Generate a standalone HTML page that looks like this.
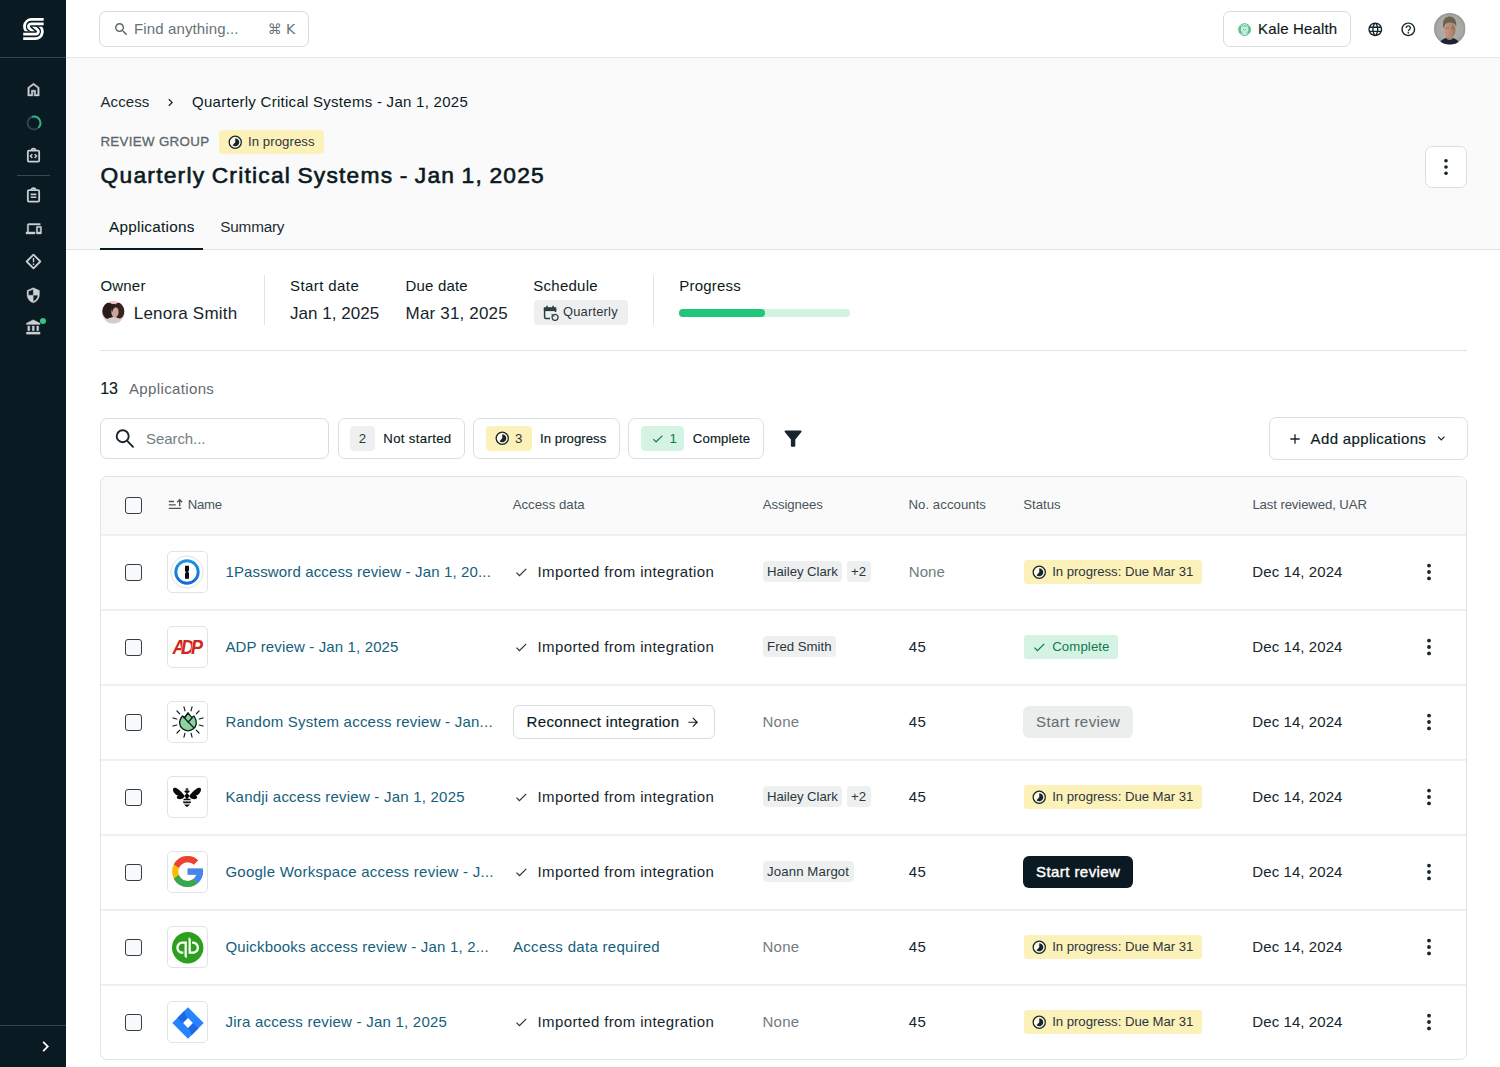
<!DOCTYPE html>
<html lang="en"><head><meta charset="utf-8"><title>Quarterly Critical Systems - Jan 1, 2025</title>
<style>

*{box-sizing:border-box;margin:0;padding:0}
html,body{width:1500px;height:1067px;overflow:hidden;background:#fff}
body{position:relative;font-family:"Liberation Sans",sans-serif;color:#0b1a22;-webkit-font-smoothing:antialiased}
.t{position:absolute;white-space:pre;display:block}
.b{position:absolute;display:block}
.box{position:absolute;background:#fff;border:1px solid #d9dddf;border-radius:7px}
svg{position:absolute;display:block;overflow:visible}
.chip{position:absolute;background:#eef0f0;border-radius:4px}
.cb{position:absolute;width:16.6px;height:16.6px;border:1.3px solid #333f45;border-radius:3px;background:#f7f9fa}
.ico{position:absolute;width:41.5px;height:41.5px;border:1px solid #e1e4e5;border-radius:5px;background:#fff}
.hl{position:absolute;height:1px;background:#e4e6e7}

</style></head>
<body>
<div class="page-bg">
<div class="b" style="left:66px;top:58px;width:1434px;height:191px;background:#fafafa"></div>
<div class="hl" style="left:66px;top:57px;width:1434px;background:#e3e5e6"></div>
<div class="hl" style="left:66px;top:249px;width:1434px;background:#e0e3e4"></div>
</div>
<aside class="sidebar">
<div class="b" style="left:0;top:0;width:66px;height:1067px;background:#0a1a23"></div>
<div class="b" style="left:0;top:57px;width:66px;height:1px;background:#34434b"></div>
<div class="b" style="left:17px;top:175px;width:33px;height:1px;background:#3a4951"></div>
<div class="b" style="left:0;top:1025px;width:66px;height:1px;background:#34434b"></div>
<svg style="left:0;top:0" width="66" height="58" viewBox="0 0 66 58"><defs><clipPath id="lgc"><rect x="0" y="0" width="66" height="31.25"/></clipPath></defs><g fill="none" stroke="#fff" stroke-width="2.8"><g clip-path="url(#lgc)"><path d="M43.66 19.46H31.5A7.0 7.0 0 0 0 29.69 33.22"/><path d="M43.66 23.97H31.0A2.5 2.5 0 0 0 29.36 28.36L34.64 32.95"/></g><g transform="rotate(180 33.43 29.04)"><g clip-path="url(#lgc)"><path d="M43.66 19.46H31.5A7.0 7.0 0 0 0 29.69 33.22"/><path d="M43.66 23.97H31.0A2.5 2.5 0 0 0 29.36 28.36L34.64 32.95"/></g></g></g></svg>
<svg style="left:24.80px;top:80.60px" width="17" height="17" viewBox="0 0 24 24" stroke="#c9cfd4" stroke-width="0.7"><path fill="#c9cfd4" d="M6 19h3v-6h6v6h3v-9l-6-4.5L6 10zm-2 2V9l8-6 8 6v12h-7v-6h-2v6z"/></svg>
<svg style="left:24.50px;top:113.80px" width="18" height="18" viewBox="0 0 24 24"><circle cx="12" cy="12" r="8.6" fill="none" stroke="#34454e" stroke-width="2.5"/><path d="M10.2 3.6A8.6 8.6 0 0 1 18.6 17.5" fill="none" stroke="#2bb57c" stroke-width="2.5" stroke-linecap="round"/></svg>
<svg style="left:25.00px;top:147.30px" width="17" height="17" viewBox="0 0 24 24"><g fill="none" stroke="#c9cfd4" stroke-width="2.5"><rect x="4" y="5" width="16" height="15.5" rx="1.6"/><path d="M9.3 5a2.7 2.7 0 0 1 5.4 0" /><path d="M10.3 10.2L7.8 12.8l2.5 2.6M13.7 10.2l2.5 2.6-2.5 2.6" stroke-width="2.1"/></g></svg>
<svg style="left:25.10px;top:186.50px" width="17" height="17" viewBox="0 0 24 24"><g fill="none" stroke="#c9cfd4" stroke-width="2.5"><rect x="4" y="4.5" width="16" height="16" rx="1.6"/><path d="M9 4.5a3 3 0 0 1 6 0" /><path d="M8 10.5h8M8 14.5h8" stroke-width="2.4"/></g></svg>
<svg style="left:25.75px;top:220.75px" width="15.5" height="15.5" viewBox="0 0 24 24" stroke="#c9cfd4" stroke-width="0.7"><path fill="#c9cfd4" d="M4 6h18V4H4c-1.1 0-2 .9-2 2v11H0v3h14v-3H4V6zm19 2h-6c-.55 0-1 .45-1 1v10c0 .55.45 1 1 1h6c.55 0 1-.45 1-1V9c0-.55-.45-1-1-1zm-1 9h-4v-7h4v7z"/></svg>
<svg style="left:24.90px;top:253.00px" width="17" height="17" viewBox="0 0 24 24"><g fill="none" stroke="#c9cfd4" stroke-width="2.5"><path d="M12 2.4L21.6 12 12 21.6 2.4 12z" stroke-linejoin="round"/></g><path fill="#c9cfd4" d="M11 7.2h2v6h-2zM11 14.8h2v2h-2z"/></svg>
<svg style="left:25.05px;top:286.55px" width="16.5" height="16.5" viewBox="0 0 24 24" stroke="#c9cfd4" stroke-width="0.5"><path fill="#c9cfd4" d="M12 1L3 5v6c0 5.55 3.84 10.74 9 12 5.16-1.26 9-6.45 9-12V5l-9-4zm0 10.99h7c-.53 4.12-3.28 7.79-7 8.94V12H5V6.3l7-3.11v8.8z"/></svg>
<svg style="left:25.15px;top:319.35px" width="16.5" height="16.5" viewBox="0 0 24 24" stroke="#c9cfd4" stroke-width="0.4"><path fill="#c9cfd4" d="M4 10h3v7H4zM10.5 10h3v7h-3zM2 19h20v3H2zM17 10h3v7h-3zM12 1L2 6v2h20V6z"/></svg>
<div class="b" style="left:39.5px;top:317.5px;width:6.6px;height:6.6px;border-radius:50%;background:#2dc97f"></div>
<svg style="left:34.70px;top:1035.50px" width="21" height="21" viewBox="0 0 24 24" ><path fill="#fff" d="M10 6L8.59 7.41 13.17 12l-4.58 4.59L10 18l6-6z"/></svg>
</aside>
<header class="topbar">
<div class="box" style="left:99px;top:11px;width:210px;height:36px;border-color:#d7dbdd"></div>
<svg style="left:112.50px;top:21.10px" width="16.6" height="16.6" viewBox="0 0 24 24" ><path fill="#5a6569" d="M15.5 14h-.79l-.28-.27C15.41 12.59 16 11.11 16 9.5 16 5.91 13.09 3 9.5 3S3 5.91 3 9.5 5.91 16 9.5 16c1.61 0 3.09-.59 4.23-1.57l.27.28v.79l5 4.99L20.49 19l-4.99-5zm-6 0C7.01 14 5 11.99 5 9.5S7.01 5 9.5 5 14 7.01 14 9.5 11.99 14 9.5 14z"/></svg>
<span class="t" style="left:134.00px;top:18.40px;font-size:15px;line-height:21px;font-weight:400;color:#687378;letter-spacing:0.121px;">Find anything...</span>
<span class="t" style="left:267.80px;top:19.40px;font-size:14px;line-height:20px;font-weight:400;color:#687378;letter-spacing:-0.078px;font-family:&quot;DejaVu Sans&quot;,sans-serif;">⌘ K</span>
<div class="box" style="left:1223px;top:11px;width:128px;height:36px;border-color:#d7dbdd"></div>
<svg style="left:1238.40px;top:22.60px" width="13.2" height="13.2" viewBox="0 0 24 24"><circle cx="12" cy="12" r="10.800" fill="#c4f1de" stroke="#58b98c" stroke-width="1.800"/><path d="M4.500 6.500C3 10 3.500 15 5 18M19.500 6.500C21 10 20.500 15 19 18" fill="none" stroke="#4fae84" stroke-width="2.600"/><path d="M9 10.500L12 13.500L15 10.500M7.500 19.500V15.500M16.500 19.500V15.500M6 5.500H18" fill="none" stroke="#5ab38b" stroke-width="1.500"/></svg>
<span class="t" style="left:1258.00px;top:18.40px;font-size:15px;line-height:21px;font-weight:400;color:#0b1a22;letter-spacing:0.149px;-webkit-text-stroke:0.15px currentColor;">Kale Health</span>
<svg style="left:1366.70px;top:20.90px" width="16.6" height="16.6" viewBox="0 0 24 24" ><path fill="#16252c" d="M11.99 2C6.47 2 2 6.48 2 12s4.47 10 9.99 10C17.52 22 22 17.52 22 12S17.52 2 11.99 2zm6.93 6h-2.95c-.32-1.25-.78-2.45-1.38-3.56 1.84.63 3.37 1.91 4.33 3.56zM12 4.04c.83 1.2 1.48 2.53 1.91 3.96h-3.82c.43-1.43 1.08-2.76 1.91-3.96zM4.26 14C4.1 13.36 4 12.69 4 12s.1-1.36.26-2h3.38c-.08.66-.14 1.32-.14 2 0 .68.06 1.34.14 2H4.26zm.82 2h2.95c.32 1.25.78 2.45 1.38 3.56-1.84-.63-3.37-1.9-4.33-3.56zm2.95-8H5.08c.96-1.66 2.49-2.93 4.33-3.56C8.81 5.55 8.35 6.75 8.03 8zM12 19.96c-.83-1.2-1.48-2.53-1.91-3.96h3.82c-.43 1.43-1.08 2.76-1.91 3.96zM14.34 14H9.66c-.09-.66-.16-1.32-.16-2 0-.68.07-1.35.16-2h4.68c.09.65.16 1.32.16 2 0 .68-.07 1.34-.16 2zm.25 5.56c.6-1.11 1.06-2.31 1.38-3.56h2.95c-.96 1.65-2.49 2.93-4.33 3.56zM16.36 14c.08-.66.14-1.32.14-2 0-.68-.06-1.34-.14-2h3.38c.16.64.26 1.31.26 2s-.1 1.36-.26 2h-3.38z"/></svg>
<svg style="left:1399.90px;top:20.90px" width="16.6" height="16.6" viewBox="0 0 24 24" ><path fill="#16252c" d="M11 18h2v-2h-2v2zm1-16C6.48 2 2 6.48 2 12s4.48 10 10 10 10-4.48 10-10S17.52 2 12 2zm0 18c-4.41 0-8-3.59-8-8s3.59-8 8-8 8 3.59 8 8-3.59 8-8 8zm0-14c-2.21 0-4 1.79-4 4h2c0-1.1.9-2 2-2s2 .9 2 2c0 2-3 1.75-3 5h2c0-2.25 3-2.5 3-5 0-2.21-1.79-4-4-4z"/></svg>
<svg style="left:1434.3px;top:13.1px" width="31.5" height="31.5" viewBox="0 0 32 32"><defs><clipPath id="av1"><circle cx="16" cy="16" r="16"/></clipPath><radialGradient id="avg" cx="0.5" cy="0.5" r="0.5"><stop offset="0" stop-color="#b1b3af"/><stop offset="0.82" stop-color="#a8a9a5"/><stop offset="1" stop-color="#959593"/></radialGradient><linearGradient id="avf" x1="0" y1="0" x2="1" y2="0"><stop offset="0" stop-color="#c89a84"/><stop offset="0.55" stop-color="#b88b74"/><stop offset="1" stop-color="#9a735f"/></linearGradient></defs><g clip-path="url(#av1)"><rect width="32" height="32" fill="url(#avg)"/><path d="M5 33C6 27.500 9.500 26 12.500 25.300L19.500 25.600C22.500 26.500 25.500 28 26 33z" fill="#1b2434"/><path d="M12.800 21h6v5.200c-1.500 1.600-4.500 1.600-6 0z" fill="#b0846d"/><ellipse cx="16" cy="17.300" rx="5.900" ry="7.900" fill="url(#avf)"/><path d="M9.600 15.500C8.200 9 10 4.200 15 3.600C20 2.800 23.600 7 22.500 14.600C22 11.500 20.500 10 17.500 9.800C14 9.600 11.500 10.500 10.800 13z" fill="#6d6250"/><path d="M11.500 15.300h3.200M17.300 15.300h3.200" stroke="#6e5245" stroke-width="0.900" opacity="0.700"/></g></svg>
</header>
<main>
<section class="page-header">
<span class="t" style="left:100.50px;top:91.40px;font-size:15px;line-height:21px;font-weight:400;color:#1b2930;letter-spacing:0.073px;">Access</span>
<svg style="left:163.00px;top:94.90px" width="15" height="15" viewBox="0 0 24 24" ><path fill="#16252c" d="M10 6L8.59 7.41 13.17 12l-4.58 4.59L10 18l6-6z"/></svg>
<span class="t" style="left:192.00px;top:91.40px;font-size:15px;line-height:21px;font-weight:400;color:#0b1a22;letter-spacing:0.273px;">Quarterly Critical Systems - Jan 1, 2025</span>
<span class="t" style="left:100.40px;top:132.20px;font-size:13.3px;line-height:19px;font-weight:400;color:#5a666b;letter-spacing:0.340px;-webkit-text-stroke:0.3px currentColor;">REVIEW GROUP</span>
<div class="b" style="left:219px;top:129.5px;width:105px;height:24.5px;border-radius:4px;background:#fdf1ba"></div>
<svg style="left:228.05px;top:134.85px" width="14.5" height="14.5" viewBox="0 0 24 24"><circle cx="12" cy="12" r="10.1" fill="#fff" fill-opacity="0.55" stroke="#16252c" stroke-width="2.1"/><path d="M12 12V5.3A6.7 6.7 0 1 1 7.52 16.98z" fill="#16252c"/></svg>
<span class="t" style="left:248.00px;top:132.80px;font-size:13.2px;line-height:18px;font-weight:400;color:#2a363c;letter-spacing:0.056px;">In progress</span>
<span class="t" style="left:100.60px;top:159.20px;font-size:22.8px;line-height:32px;font-weight:400;color:#0b1a22;letter-spacing:1.218px;word-spacing:-1.2px;-webkit-text-stroke:0.62px currentColor;">Quarterly Critical Systems - Jan 1, 2025</span>
<div class="box" style="left:1425px;top:146px;width:42px;height:42px;border-color:#dcdfe1"></div>
<svg style="left:1443px;top:156.6px" width="6" height="20" viewBox="0 0 6 20"><circle cx="3" cy="3.7" r="1.8" fill="#16252c"/><circle cx="3" cy="10" r="1.8" fill="#16252c"/><circle cx="3" cy="16.3" r="1.8" fill="#16252c"/></svg>
<span class="t" style="left:109.00px;top:216.20px;font-size:15.3px;line-height:21px;font-weight:400;color:#0b1a22;letter-spacing:0.260px;-webkit-text-stroke:0.08px currentColor;">Applications</span>
<span class="t" style="left:220.30px;top:216.20px;font-size:15.3px;line-height:21px;font-weight:400;color:#1f2c33;letter-spacing:-0.208px;">Summary</span>
<div class="b" style="left:100px;top:248px;width:103px;height:2px;background:#0b1a22"></div>
</section>
<section class="review-meta">
<span class="t" style="left:100.40px;top:275.00px;font-size:15px;line-height:21px;font-weight:400;color:#0b1a22;letter-spacing:0.203px;">Owner</span>
<svg style="left:101.5px;top:301.400px" width="22.600" height="22.600" viewBox="0 0 24 24"><defs><clipPath id="av2"><circle cx="12" cy="12" r="12"/></clipPath></defs><g clip-path="url(#av2)"><rect width="24" height="24" fill="#efc9d1"/><ellipse cx="7" cy="10.600" rx="6.700" ry="8.800" fill="#2b1a1c"/><ellipse cx="17.800" cy="10.400" rx="6.100" ry="8.500" fill="#38231f"/><ellipse cx="12.300" cy="9.500" rx="4.500" ry="6.500" fill="#2b1a1c"/><path d="M3.500 25C4 19.500 7 17.300 12.500 17.300S20.500 19.500 21 25z" fill="#d6ccc8"/><ellipse cx="13.700" cy="11.600" rx="3.900" ry="5.600" fill="#caa59b"/><path d="M10 9.500C10.500 6.500 13 5.500 15.500 6.300C12.500 7 11.500 8.500 10.800 12z" fill="#2b1a1c"/></g></svg>
<span class="t" style="left:133.80px;top:301.50px;font-size:17px;line-height:24px;font-weight:400;color:#16252c;letter-spacing:0.198px;">Lenora Smith</span>
<div class="b" style="left:264px;top:275px;width:1px;height:50px;background:#e1e4e5"></div>
<span class="t" style="left:290.00px;top:275.00px;font-size:15px;line-height:21px;font-weight:400;color:#0b1a22;letter-spacing:0.415px;">Start date</span>
<span class="t" style="left:290.00px;top:301.50px;font-size:17px;line-height:24px;font-weight:400;color:#16252c;letter-spacing:0.040px;">Jan 1, 2025</span>
<span class="t" style="left:405.60px;top:275.00px;font-size:15px;line-height:21px;font-weight:400;color:#0b1a22;letter-spacing:0.164px;">Due date</span>
<span class="t" style="left:405.60px;top:301.50px;font-size:17px;line-height:24px;font-weight:400;color:#16252c;letter-spacing:0.168px;">Mar 31, 2025</span>
<span class="t" style="left:533.30px;top:275.00px;font-size:15px;line-height:21px;font-weight:400;color:#0b1a22;letter-spacing:0.255px;">Schedule</span>
<div class="b" style="left:533.5px;top:300px;width:94.5px;height:24.7px;border-radius:4px;background:#eef0f0"></div>
<svg style="left:540px;top:303px" width="22" height="20" viewBox="540 303 22 20"><g fill="none" stroke="#2b3f40" stroke-width="1.500"><path d="M550 318.400H545.800A1.200 1.200 0 0 1 544.600 317.200V308.600"/><path d="M555.500 308.600V312"/><path d="M547 305.800V308M553.100 305.800V308" stroke-width="1.600"/><path d="M552.300 316.300A3 3 0 1 0 553.400 314.900" stroke-width="1.300"/></g><path d="M543.850 307.200H556.250V311.100H543.850z" fill="#2b3f40"/><path d="M551.700 313.400V316.600H554.900z" fill="#2b3f40"/></svg>
<span class="t" style="left:563.00px;top:302.80px;font-size:12.9px;line-height:18px;font-weight:400;color:#2a363c;letter-spacing:0.198px;">Quarterly</span>
<div class="b" style="left:653px;top:275px;width:1px;height:50px;background:#e1e4e5"></div>
<span class="t" style="left:679.30px;top:275.00px;font-size:15px;line-height:21px;font-weight:400;color:#0b1a22;letter-spacing:0.196px;">Progress</span>
<div class="b" style="left:679px;top:308.5px;width:171px;height:8px;border-radius:4px;background:#d3f2e2"></div>
<div class="b" style="left:679px;top:308.5px;width:85.5px;height:8px;border-radius:4px;background:#1fc77c"></div>
<div class="hl" style="left:100px;top:350px;width:1367px;background:#e1e4e5"></div>
</section>
<section class="toolbar">
<span class="t" style="left:100.30px;top:377.50px;font-size:16px;line-height:22px;font-weight:400;color:#0b1a22;letter-spacing:-0.198px;-webkit-text-stroke:0.15px currentColor;">13</span>
<span class="t" style="left:129.00px;top:378.00px;font-size:15px;line-height:21px;font-weight:400;color:#5f6a6f;letter-spacing:0.359px;">Applications</span>
<div class="box" style="left:100px;top:418px;width:229px;height:41px;border-color:#d9dddf"></div>
<svg style="left:110px;top:425px" width="30" height="28" viewBox="110 425 30 28"><g fill="none" stroke="#16252c" stroke-width="1.9"><circle cx="122.7" cy="436.2" r="6"/><path d="M127 440.6L133 446.8" stroke-linecap="round"/></g></svg>
<span class="t" style="left:146.00px;top:428.00px;font-size:15px;line-height:21px;font-weight:400;color:#747e82;letter-spacing:-0.070px;">Search...</span>
<div class="box" style="left:337.5px;top:418px;width:127px;height:41px;border-color:#dcdfe1"></div>
<div class="chip" style="left:350px;top:426px;width:25px;height:25px"></div>
<span class="t" style="left:358.70px;top:429.50px;font-size:13.2px;line-height:18px;font-weight:400;color:#2a363c;">2</span>
<span class="t" style="left:383.30px;top:429.50px;font-size:13.2px;line-height:18px;font-weight:400;color:#0b1a22;letter-spacing:0.335px;-webkit-text-stroke:0.15px currentColor;">Not started</span>
<div class="box" style="left:473px;top:418px;width:146.5px;height:41px;border-color:#dcdfe1"></div>
<div class="chip" style="left:485.5px;top:426px;width:46px;height:25px;background:#fdf1ba"></div>
<svg style="left:494.95px;top:431.25px" width="14.5" height="14.5" viewBox="0 0 24 24"><circle cx="12" cy="12" r="10.1" fill="#fff" fill-opacity="0.55" stroke="#16252c" stroke-width="2.1"/><path d="M12 12V5.3A6.7 6.7 0 1 1 7.52 16.98z" fill="#16252c"/></svg>
<span class="t" style="left:515.00px;top:429.50px;font-size:13.2px;line-height:18px;font-weight:400;color:#2a363c;">3</span>
<span class="t" style="left:540.00px;top:429.50px;font-size:13.2px;line-height:18px;font-weight:400;color:#0b1a22;letter-spacing:0.038px;-webkit-text-stroke:0.15px currentColor;">In progress</span>
<div class="box" style="left:628px;top:418px;width:135.5px;height:41px;border-color:#dcdfe1"></div>
<div class="chip" style="left:640.7px;top:426px;width:43.500px;height:25px;background:#d5f3e3"></div>
<svg style="left:650.55px;top:431.85px" width="13.5" height="13.5" viewBox="0 0 24 24" ><path fill="#0e7a4d" d="M9 16.17L4.83 12l-1.42 1.41L9 19 21 7l-1.41-1.41z"/></svg>
<span class="t" style="left:669.50px;top:429.50px;font-size:13.2px;line-height:18px;font-weight:400;color:#0e7a4d;">1</span>
<span class="t" style="left:692.80px;top:429.50px;font-size:13.2px;line-height:18px;font-weight:400;color:#0b1a22;letter-spacing:0.131px;-webkit-text-stroke:0.15px currentColor;">Complete</span>
<svg style="left:780px;top:426px" width="26" height="26" viewBox="780 426 26 26"><path d="M785.5 430.400H800.700C801.500 430.400 801.900 431.300 801.400 431.900L795.300 439.400V445.800C795.300 446.300 794.900 446.700 794.400 446.700H791.800C791.300 446.700 790.900 446.300 790.900 445.800V439.400L784.800 431.900C784.300 431.300 784.700 430.400 785.500 430.400Z" fill="#16252c"/></svg>
<div class="box" style="left:1269px;top:417px;width:199px;height:43px;border-color:#dcdfe1"></div>
<svg style="left:1286.70px;top:430.60px" width="16" height="16" viewBox="0 0 24 24" ><path fill="#16252c" d="M19 13h-6v6h-2v-6H5v-2h6V5h2v6h6v2z"/></svg>
<span class="t" style="left:1310.60px;top:427.60px;font-size:15px;line-height:21px;font-weight:400;color:#0b1a22;letter-spacing:0.345px;-webkit-text-stroke:0.17px currentColor;">Add applications</span>
<svg style="left:1434.25px;top:431.35px" width="14.5" height="14.5" viewBox="0 0 24 24" ><path fill="#16252c" d="M16.59 8.59L12 13.17 7.41 8.59 6 10l6 6 6-6z"/></svg>
</section>
<section class="applications-table">
<div class="b" style="left:100px;top:476px;width:1367px;height:584px;border:1px solid #e0e2e3;border-radius:7px;background:#fff;overflow:hidden"><div style="position:absolute;left:0;top:0;width:100%;height:58px;background:#fafafa"></div></div>
<div class="cb" style="left:125px;top:497px"></div>
<svg style="left:165px;top:495px" width="22" height="18" viewBox="165 495 22 18"><g fill="none" stroke="#49555a" stroke-width="1.35"><path d="M168.8 501.5H174M168.8 504.9H175.800M168.8 508.4H181.2M179.7 506.3V500M177.200 502.300L179.700 499.800L182.200 502.300"/></g></svg>
<span class="t" style="left:187.80px;top:496.00px;font-size:13.2px;line-height:18px;font-weight:400;color:#49555a;letter-spacing:-0.297px;">Name</span>
<span class="t" style="left:512.70px;top:496.00px;font-size:13.2px;line-height:18px;font-weight:400;color:#49555a;letter-spacing:0.014px;">Access data</span>
<span class="t" style="left:762.80px;top:496.00px;font-size:13.2px;line-height:18px;font-weight:400;color:#49555a;letter-spacing:-0.095px;">Assignees</span>
<span class="t" style="left:908.50px;top:496.00px;font-size:13.2px;line-height:18px;font-weight:400;color:#49555a;letter-spacing:0.044px;">No. accounts</span>
<span class="t" style="left:1023.20px;top:496.00px;font-size:13.2px;line-height:18px;font-weight:400;color:#49555a;letter-spacing:0.002px;">Status</span>
<span class="t" style="left:1252.40px;top:496.00px;font-size:13.2px;line-height:18px;font-weight:400;color:#49555a;letter-spacing:-0.119px;">Last reviewed, UAR</span>
<div class="b" style="left:101px;top:534px;width:1365px;height:2px;background:linear-gradient(#edeeee 50%,#f0f1f1 50%)"></div>
<div class="cb" style="left:125px;top:564.0px"></div>
<div class="ico" style="left:166.8px;top:551.4px"></div>
<span class="t" style="left:225.40px;top:561.20px;font-size:15px;line-height:21px;font-weight:400;color:#14607c;letter-spacing:0.144px;">1Password access review - Jan 1, 20...</span>
<svg style="left:513.55px;top:565.05px" width="14.5" height="14.5" viewBox="0 0 24 24" ><path fill="#2a363c" d="M9 16.17L4.83 12l-1.42 1.41L9 19 21 7l-1.41-1.41z"/></svg>
<span class="t" style="left:537.60px;top:561.30px;font-size:15px;line-height:21px;font-weight:400;color:#16252c;letter-spacing:0.361px;">Imported from integration</span>
<div class="chip" style="left:762.5px;top:561.4px;width:79.8px;height:21px"></div>
<span class="t" style="left:767.10px;top:563.00px;font-size:13.2px;line-height:18px;font-weight:400;color:#2a363c;letter-spacing:-0.041px;">Hailey Clark</span>
<div class="chip" style="left:846.5px;top:561.4px;width:24.2px;height:21px"></div>
<span class="t" style="left:851.10px;top:563.00px;font-size:13.2px;line-height:18px;font-weight:400;color:#2a363c;letter-spacing:-0.023px;">+2</span>
<span class="t" style="left:908.80px;top:561.30px;font-size:15px;line-height:21px;font-weight:400;color:#727c80;letter-spacing:0.035px;">None</span>
<div class="b" style="left:1023.5px;top:559.9px;width:178.800px;height:24.300px;border-radius:3px;background:#fdf1ba"></div>
<svg style="left:1032.35px;top:564.75px" width="14.5" height="14.5" viewBox="0 0 24 24"><circle cx="12" cy="12" r="10.1" fill="#fff" fill-opacity="0.55" stroke="#16252c" stroke-width="2.1"/><path d="M12 12V5.3A6.7 6.7 0 1 1 7.52 16.98z" fill="#16252c"/></svg>
<span class="t" style="left:1052.20px;top:563.20px;font-size:13.2px;line-height:18px;font-weight:400;color:#2a363c;letter-spacing:-0.044px;">In progress: Due Mar 31</span>
<span class="t" style="left:1252.30px;top:561.30px;font-size:15px;line-height:21px;font-weight:400;color:#16252c;letter-spacing:0.080px;">Dec 14, 2024</span>
<svg style="left:1426px;top:561.8px" width="6" height="20" viewBox="0 0 6 20"><circle cx="3" cy="3.5999999999999996" r="1.9" fill="#16252c"/><circle cx="3" cy="10" r="1.9" fill="#16252c"/><circle cx="3" cy="16.4" r="1.9" fill="#16252c"/></svg>
<div class="b" style="left:101px;top:609px;width:1365px;height:2px;background:linear-gradient(#edeeee 50%,#f0f1f1 50%)"></div>
<div class="cb" style="left:125px;top:639.0px"></div>
<div class="ico" style="left:166.8px;top:626.4px"></div>
<span class="t" style="left:225.40px;top:636.20px;font-size:15px;line-height:21px;font-weight:400;color:#14607c;letter-spacing:0.141px;">ADP review - Jan 1, 2025</span>
<svg style="left:513.55px;top:640.05px" width="14.5" height="14.5" viewBox="0 0 24 24" ><path fill="#2a363c" d="M9 16.17L4.83 12l-1.42 1.41L9 19 21 7l-1.41-1.41z"/></svg>
<span class="t" style="left:537.60px;top:636.30px;font-size:15px;line-height:21px;font-weight:400;color:#16252c;letter-spacing:0.361px;">Imported from integration</span>
<div class="chip" style="left:762.5px;top:636.4px;width:73.6px;height:21px"></div>
<span class="t" style="left:767.10px;top:638.00px;font-size:13.2px;line-height:18px;font-weight:400;color:#2a363c;letter-spacing:-0.010px;">Fred Smith</span>
<span class="t" style="left:908.80px;top:636.30px;font-size:15px;line-height:21px;font-weight:400;color:#16252c;letter-spacing:0.456px;">45</span>
<div class="b" style="left:1023.5px;top:634.9px;width:94.800px;height:24.300px;border-radius:3px;background:#d5f3e3"></div>
<svg style="left:1032.35px;top:639.85px" width="14.5" height="14.5" viewBox="0 0 24 24" ><path fill="#0e7a4d" d="M9 16.17L4.83 12l-1.42 1.41L9 19 21 7l-1.41-1.41z"/></svg>
<span class="t" style="left:1052.20px;top:638.20px;font-size:13.2px;line-height:18px;font-weight:400;color:#0e7a4d;letter-spacing:0.118px;">Complete</span>
<span class="t" style="left:1252.30px;top:636.30px;font-size:15px;line-height:21px;font-weight:400;color:#16252c;letter-spacing:0.080px;">Dec 14, 2024</span>
<svg style="left:1426px;top:636.8px" width="6" height="20" viewBox="0 0 6 20"><circle cx="3" cy="3.5999999999999996" r="1.9" fill="#16252c"/><circle cx="3" cy="10" r="1.9" fill="#16252c"/><circle cx="3" cy="16.4" r="1.9" fill="#16252c"/></svg>
<div class="b" style="left:101px;top:684px;width:1365px;height:2px;background:linear-gradient(#edeeee 50%,#f0f1f1 50%)"></div>
<div class="cb" style="left:125px;top:714.0px"></div>
<div class="ico" style="left:166.8px;top:701.4px"></div>
<span class="t" style="left:225.40px;top:711.20px;font-size:15px;line-height:21px;font-weight:400;color:#14607c;letter-spacing:0.226px;">Random System access review - Jan...</span>
<div class="box" style="left:512.5px;top:705.0px;width:202px;height:34px;border-color:#d9dcdd;border-radius:6px"></div>
<span class="t" style="left:526.60px;top:711.30px;font-size:15px;line-height:21px;font-weight:400;color:#0b1a22;letter-spacing:0.327px;-webkit-text-stroke:0.17px currentColor;">Reconnect integration</span>
<svg style="left:685.55px;top:715.25px" width="14.5" height="14.5" viewBox="0 0 24 24" ><path fill="#16252c" d="M12 4l-1.41 1.41L16.17 11H4v2h12.17l-5.58 5.59L12 20l8-8z"/></svg>
<span class="t" style="left:762.60px;top:711.30px;font-size:15px;line-height:21px;font-weight:400;color:#727c80;letter-spacing:0.185px;">None</span>
<span class="t" style="left:908.80px;top:711.30px;font-size:15px;line-height:21px;font-weight:400;color:#16252c;letter-spacing:0.456px;">45</span>
<div class="b" style="left:1023px;top:705.8px;width:110px;height:32.400px;border-radius:6px;background:#eceeee"></div>
<span class="t" style="left:1036.00px;top:711.30px;font-size:15px;line-height:21px;font-weight:400;color:#666f74;letter-spacing:0.433px;-webkit-text-stroke:0.1px currentColor;">Start review</span>
<span class="t" style="left:1252.30px;top:711.30px;font-size:15px;line-height:21px;font-weight:400;color:#16252c;letter-spacing:0.080px;">Dec 14, 2024</span>
<svg style="left:1426px;top:711.8px" width="6" height="20" viewBox="0 0 6 20"><circle cx="3" cy="3.5999999999999996" r="1.9" fill="#16252c"/><circle cx="3" cy="10" r="1.9" fill="#16252c"/><circle cx="3" cy="16.4" r="1.9" fill="#16252c"/></svg>
<div class="b" style="left:101px;top:759px;width:1365px;height:2px;background:linear-gradient(#edeeee 50%,#f0f1f1 50%)"></div>
<div class="cb" style="left:125px;top:789.0px"></div>
<div class="ico" style="left:166.8px;top:776.4px"></div>
<span class="t" style="left:225.40px;top:786.20px;font-size:15px;line-height:21px;font-weight:400;color:#14607c;letter-spacing:0.224px;">Kandji access review - Jan 1, 2025</span>
<svg style="left:513.55px;top:790.05px" width="14.5" height="14.5" viewBox="0 0 24 24" ><path fill="#2a363c" d="M9 16.17L4.83 12l-1.42 1.41L9 19 21 7l-1.41-1.41z"/></svg>
<span class="t" style="left:537.60px;top:786.30px;font-size:15px;line-height:21px;font-weight:400;color:#16252c;letter-spacing:0.361px;">Imported from integration</span>
<div class="chip" style="left:762.5px;top:786.4px;width:79.8px;height:21px"></div>
<span class="t" style="left:767.10px;top:788.00px;font-size:13.2px;line-height:18px;font-weight:400;color:#2a363c;letter-spacing:-0.041px;">Hailey Clark</span>
<div class="chip" style="left:846.5px;top:786.4px;width:24.2px;height:21px"></div>
<span class="t" style="left:851.10px;top:788.00px;font-size:13.2px;line-height:18px;font-weight:400;color:#2a363c;letter-spacing:-0.023px;">+2</span>
<span class="t" style="left:908.80px;top:786.30px;font-size:15px;line-height:21px;font-weight:400;color:#16252c;letter-spacing:0.456px;">45</span>
<div class="b" style="left:1023.5px;top:784.9px;width:178.800px;height:24.300px;border-radius:3px;background:#fdf1ba"></div>
<svg style="left:1032.35px;top:789.75px" width="14.5" height="14.5" viewBox="0 0 24 24"><circle cx="12" cy="12" r="10.1" fill="#fff" fill-opacity="0.55" stroke="#16252c" stroke-width="2.1"/><path d="M12 12V5.3A6.7 6.7 0 1 1 7.52 16.98z" fill="#16252c"/></svg>
<span class="t" style="left:1052.20px;top:788.20px;font-size:13.2px;line-height:18px;font-weight:400;color:#2a363c;letter-spacing:-0.044px;">In progress: Due Mar 31</span>
<span class="t" style="left:1252.30px;top:786.30px;font-size:15px;line-height:21px;font-weight:400;color:#16252c;letter-spacing:0.080px;">Dec 14, 2024</span>
<svg style="left:1426px;top:786.8px" width="6" height="20" viewBox="0 0 6 20"><circle cx="3" cy="3.5999999999999996" r="1.9" fill="#16252c"/><circle cx="3" cy="10" r="1.9" fill="#16252c"/><circle cx="3" cy="16.4" r="1.9" fill="#16252c"/></svg>
<div class="b" style="left:101px;top:834px;width:1365px;height:2px;background:linear-gradient(#edeeee 50%,#f0f1f1 50%)"></div>
<div class="cb" style="left:125px;top:864.0px"></div>
<div class="ico" style="left:166.8px;top:851.4px"></div>
<span class="t" style="left:225.40px;top:861.20px;font-size:15px;line-height:21px;font-weight:400;color:#14607c;letter-spacing:0.254px;">Google Workspace access review - J...</span>
<svg style="left:513.55px;top:865.05px" width="14.5" height="14.5" viewBox="0 0 24 24" ><path fill="#2a363c" d="M9 16.17L4.83 12l-1.42 1.41L9 19 21 7l-1.41-1.41z"/></svg>
<span class="t" style="left:537.60px;top:861.30px;font-size:15px;line-height:21px;font-weight:400;color:#16252c;letter-spacing:0.361px;">Imported from integration</span>
<div class="chip" style="left:762.5px;top:861.4px;width:91.2px;height:21px"></div>
<span class="t" style="left:767.10px;top:863.00px;font-size:13.2px;line-height:18px;font-weight:400;color:#2a363c;letter-spacing:0.113px;">Joann Margot</span>
<span class="t" style="left:908.80px;top:861.30px;font-size:15px;line-height:21px;font-weight:400;color:#16252c;letter-spacing:0.456px;">45</span>
<div class="b" style="left:1023px;top:855.8px;width:110px;height:32.400px;border-radius:6px;background:#0b1a22"></div>
<span class="t" style="left:1036.00px;top:861.30px;font-size:15px;line-height:21px;font-weight:400;color:#fff;letter-spacing:0.433px;-webkit-text-stroke:0.42px #fff;">Start review</span>
<span class="t" style="left:1252.30px;top:861.30px;font-size:15px;line-height:21px;font-weight:400;color:#16252c;letter-spacing:0.080px;">Dec 14, 2024</span>
<svg style="left:1426px;top:861.8px" width="6" height="20" viewBox="0 0 6 20"><circle cx="3" cy="3.5999999999999996" r="1.9" fill="#16252c"/><circle cx="3" cy="10" r="1.9" fill="#16252c"/><circle cx="3" cy="16.4" r="1.9" fill="#16252c"/></svg>
<div class="b" style="left:101px;top:909px;width:1365px;height:2px;background:linear-gradient(#edeeee 50%,#f0f1f1 50%)"></div>
<div class="cb" style="left:125px;top:939.0px"></div>
<div class="ico" style="left:166.8px;top:926.4px"></div>
<span class="t" style="left:225.40px;top:936.20px;font-size:15px;line-height:21px;font-weight:400;color:#14607c;letter-spacing:0.196px;">Quickbooks access review - Jan 1, 2...</span>
<span class="t" style="left:513.00px;top:936.30px;font-size:15px;line-height:21px;font-weight:400;color:#14607c;letter-spacing:0.304px;">Access data required</span>
<span class="t" style="left:762.60px;top:936.30px;font-size:15px;line-height:21px;font-weight:400;color:#727c80;letter-spacing:0.185px;">None</span>
<span class="t" style="left:908.80px;top:936.30px;font-size:15px;line-height:21px;font-weight:400;color:#16252c;letter-spacing:0.456px;">45</span>
<div class="b" style="left:1023.5px;top:934.9px;width:178.800px;height:24.300px;border-radius:3px;background:#fdf1ba"></div>
<svg style="left:1032.35px;top:939.75px" width="14.5" height="14.5" viewBox="0 0 24 24"><circle cx="12" cy="12" r="10.1" fill="#fff" fill-opacity="0.55" stroke="#16252c" stroke-width="2.1"/><path d="M12 12V5.3A6.7 6.7 0 1 1 7.52 16.98z" fill="#16252c"/></svg>
<span class="t" style="left:1052.20px;top:938.20px;font-size:13.2px;line-height:18px;font-weight:400;color:#2a363c;letter-spacing:-0.044px;">In progress: Due Mar 31</span>
<span class="t" style="left:1252.30px;top:936.30px;font-size:15px;line-height:21px;font-weight:400;color:#16252c;letter-spacing:0.080px;">Dec 14, 2024</span>
<svg style="left:1426px;top:936.8px" width="6" height="20" viewBox="0 0 6 20"><circle cx="3" cy="3.5999999999999996" r="1.9" fill="#16252c"/><circle cx="3" cy="10" r="1.9" fill="#16252c"/><circle cx="3" cy="16.4" r="1.9" fill="#16252c"/></svg>
<div class="b" style="left:101px;top:984px;width:1365px;height:2px;background:linear-gradient(#edeeee 50%,#f0f1f1 50%)"></div>
<div class="cb" style="left:125px;top:1014.0px"></div>
<div class="ico" style="left:166.8px;top:1001.4px"></div>
<span class="t" style="left:225.40px;top:1011.20px;font-size:15px;line-height:21px;font-weight:400;color:#14607c;letter-spacing:0.235px;">Jira access review - Jan 1, 2025</span>
<svg style="left:513.55px;top:1015.05px" width="14.5" height="14.5" viewBox="0 0 24 24" ><path fill="#2a363c" d="M9 16.17L4.83 12l-1.42 1.41L9 19 21 7l-1.41-1.41z"/></svg>
<span class="t" style="left:537.60px;top:1011.30px;font-size:15px;line-height:21px;font-weight:400;color:#16252c;letter-spacing:0.361px;">Imported from integration</span>
<span class="t" style="left:762.60px;top:1011.30px;font-size:15px;line-height:21px;font-weight:400;color:#727c80;letter-spacing:0.185px;">None</span>
<span class="t" style="left:908.80px;top:1011.30px;font-size:15px;line-height:21px;font-weight:400;color:#16252c;letter-spacing:0.456px;">45</span>
<div class="b" style="left:1023.5px;top:1009.9px;width:178.800px;height:24.300px;border-radius:3px;background:#fdf1ba"></div>
<svg style="left:1032.35px;top:1014.75px" width="14.5" height="14.5" viewBox="0 0 24 24"><circle cx="12" cy="12" r="10.1" fill="#fff" fill-opacity="0.55" stroke="#16252c" stroke-width="2.1"/><path d="M12 12V5.3A6.7 6.7 0 1 1 7.52 16.98z" fill="#16252c"/></svg>
<span class="t" style="left:1052.20px;top:1013.20px;font-size:13.2px;line-height:18px;font-weight:400;color:#2a363c;letter-spacing:-0.044px;">In progress: Due Mar 31</span>
<span class="t" style="left:1252.30px;top:1011.30px;font-size:15px;line-height:21px;font-weight:400;color:#16252c;letter-spacing:0.080px;">Dec 14, 2024</span>
<svg style="left:1426px;top:1011.8px" width="6" height="20" viewBox="0 0 6 20"><circle cx="3" cy="3.5999999999999996" r="1.9" fill="#16252c"/><circle cx="3" cy="10" r="1.9" fill="#16252c"/><circle cx="3" cy="16.4" r="1.9" fill="#16252c"/></svg>
<svg style="left:166.4px;top:551.1px" width="42" height="42" viewBox="-21 -21 42 42" ><defs><linearGradient id="g1p" x1="0" y1="0" x2="0" y2="1"><stop offset="0" stop-color="#1d95e2"/><stop offset="1" stop-color="#0f6bd6"/></linearGradient></defs><circle r="16.1" fill="#fff" stroke="#dcdedf" stroke-width="0.9"/><circle r="11.2" fill="#fff" stroke="url(#g1p)" stroke-width="2.9"/><path d="M-2 -6.2H2V-1.600L1.100 -0.300L2 1V6.800H-2V1.600L-1.100 0.300L-2 -1z" fill="#0d0d0d"/></svg>
<svg style="left:166.6px;top:626.4px" width="42" height="42" viewBox="-21 -21 42 42" ><text transform="scale(0.9 1)" y="7.200" font-family="Liberation Sans, sans-serif" font-weight="700" font-style="italic" font-size="20" fill="#d0271d" stroke="#fff" stroke-width="1" paint-order="stroke"><tspan x="-17.300">A</tspan><tspan x="-7.800">D</tspan><tspan x="3.300">P</tspan></text></svg>
<svg style="left:166.5px;top:701.1px" width="42" height="42" viewBox="-21 -21 42 42" ><path d="M3.00 -11.20L4.04 -15.07M8.20 -8.20L11.03 -11.03M11.20 -3.00L15.07 -4.04M11.20 3.00L15.07 4.04M8.20 8.20L11.03 11.03M3.00 11.20L4.04 15.07M-3.00 11.20L-4.04 15.07M-8.20 8.20L-11.03 11.03M-11.20 3.00L-15.07 4.04M-11.20 -3.00L-15.07 -4.04M-8.20 -8.20L-11.03 -11.03M-3.00 -11.20L-4.04 -15.07" stroke="#0c2017" stroke-width="1.150" stroke-linecap="round" fill="none"/><path d="M0 -9L-3.400 -4.700L-5.500 -6C-7.800 -3 -8.600 0 -8.300 1.600C-7.800 6 -4 8.800 0 8.800C4 8.800 7.800 6 8.300 1.600C8.600 -1 7.600 -3.500 6 -6L3.800 -4.400Z" fill="#8cd2a3" stroke="#0c2017" stroke-width="1.350" stroke-linejoin="round"/><path d="M-4.300 -4.700L5.900 5.900M3.800 -3.700L0 0.200M-3.200 -4L0 -9" stroke="#0c2017" stroke-width="1.350" fill="none" stroke-linecap="round"/></svg>
<svg style="left:166.2px;top:776.4px" width="42" height="42" viewBox="-21 -21 42 42" ><g fill="#0a0a0a"><path d="M-2.300 -1C-4.500 -4 -8.500 -8.200 -11.500 -9.200C-13.800 -9.800 -14.600 -8 -13.600 -5.600C-12.600 -3.200 -10.800 -2 -8.600 -1.300C-10.600 -0.800 -10.700 0.800 -9.300 1.700C-7.500 2.600 -4.600 2.300 -3 0.200Z"/><g transform="scale(-1 1)"><path d="M-2.300 -1C-4.500 -4 -8.500 -8.200 -11.500 -9.200C-13.800 -9.800 -14.600 -8 -13.600 -5.600C-12.600 -3.200 -10.800 -2 -8.600 -1.300C-10.600 -0.800 -10.700 0.800 -9.300 1.700C-7.500 2.600 -4.600 2.300 -3 0.200Z"/></g><ellipse cx="0" cy="-7.900" rx="1.600" ry="0.800"/><ellipse cx="0" cy="-5.400" rx="2.700" ry="1.300"/><path d="M0 -4.500L2.600 -1L0 2.300L-2.600 -1z"/><path d="M-4 3.300C-3.600 1.800 -2 1.500 0 1.500S3.600 1.800 4 3.300z"/><path d="M-4.100 4.600H4.100C4 5.600 3.600 6 3 6.200H-3C-3.600 6 -4 5.600 -4.100 4.600z"/><path d="M-3 7.600H3L0.600 9.700H-0.600z"/></g></svg>
<svg style="left:169.00px;top:853.40px" width="37.2" height="37.2" viewBox="0 0 48 48"><path fill="#fbbc05" d="M43.611,20.083H42V20H24v8h11.303c-1.649,4.657-6.080,8-11.303,8c-6.627,0-12-5.373-12-12c0-6.627,5.373-12,12-12c3.059,0,5.842,1.154,7.961,3.039l5.657-5.657C34.046,6.053,29.268,4,24,4C12.955,4,4,12.955,4,24c0,11.045,8.955,20,20,20c11.045,0,20-8.955,20-20C44,22.659,43.862,21.350,43.611,20.083z"/><path fill="#ea4335" d="M6.306,14.691l6.571,4.819C14.655,15.108,18.961,12,24,12c3.059,0,5.842,1.154,7.961,3.039l5.657-5.657C34.046,6.053,29.268,4,24,4C16.318,4,9.656,8.337,6.306,14.691z"/><path fill="#34a853" d="M24,44c5.166,0,9.860-1.977,13.409-5.192l-6.190-5.238C29.211,35.091,26.715,36,24,36c-5.202,0-9.619-3.317-11.283-7.946l-6.522,5.025C9.505,39.556,16.227,44,24,44z"/><path fill="#4285f4" d="M43.611,20.083H42V20H24v8h11.303c-0.792,2.237-2.231,4.166-4.087,5.571c0.001-0.001,0.002-0.001,0.003-0.002l6.190,5.238C36.971,39.205,44,34,44,24C44,22.659,43.862,21.350,43.611,20.083z"/></svg>
<svg style="left:171.80px;top:931.50px" width="31.4" height="31.4" viewBox="0 0 24 24"><circle cx="12" cy="12" r="11.500" fill="#fff"/><path fill="#2ca01c" d="M12 0C5.373 0 0 5.373 0 12s5.373 12 12 12 12-5.373 12-12S18.627 0 12 0zm.642 4.1335c.9554 0 1.7296.776 1.7296 1.7332v9.0667h1.6c1.614 0 2.9275-1.3156 2.9275-2.933 0-1.6173-1.3136-2.9333-2.9276-2.9333h-.6654V7.3334h.6654c2.5722 0 4.6577 2.0897 4.6577 4.667 0 2.5774-2.0855 4.6666-4.6577 4.6666H12.642zM7.9837 7.333h3.3291v12.533c-.9555 0-1.730-.7759-1.730-1.7332V9.0662H7.9837c-1.6146 0-2.9277 1.316-2.9277 2.9334 0 1.6175 1.3131 2.9333 2.9277 2.9333h.6654v1.7332h-.6654c-2.5725 0-4.6577-2.0892-4.6577-4.6665 0-2.5771 2.0852-4.6666 4.6577-4.6666Z"/></svg>
<svg style="left:166.5px;top:1001.5px" width="42" height="42" viewBox="-21 -21 42 42" ><defs><linearGradient id="gj1" x1="0" y1="0" x2="1" y2="1"><stop offset="0" stop-color="#1557d0"/><stop offset="0.600" stop-color="#2684ff"/></linearGradient><linearGradient id="gj2" x1="1" y1="1" x2="0" y2="0"><stop offset="0" stop-color="#1557d0"/><stop offset="0.600" stop-color="#2684ff"/></linearGradient></defs><path d="M0 -15.700L15.700 0L0 15.700L-15.700 0Z" fill="#2684ff"/><path d="M0 -15.700L-7.850 -7.850C-3.600 -3.700 -1 -1 0 -4.900L4.900 0Z" fill="url(#gj1)" opacity="0"/><path d="M-3.300 -12.400L-10.500 -5.200L-4.900 0L0 -4.900C-2.300 -7.200 -3.300 -9.600 -3.300 -12.400Z" fill="#1d68e4"/><path d="M3.300 12.400L10.500 5.200L4.900 0L0 4.900C2.300 7.200 3.300 9.600 3.300 12.400Z" fill="#1d68e4"/><path d="M0 -4.900L4.900 0L0 4.900L-4.900 0Z" fill="#fff"/></svg>
</section>
</main>
</body></html>
